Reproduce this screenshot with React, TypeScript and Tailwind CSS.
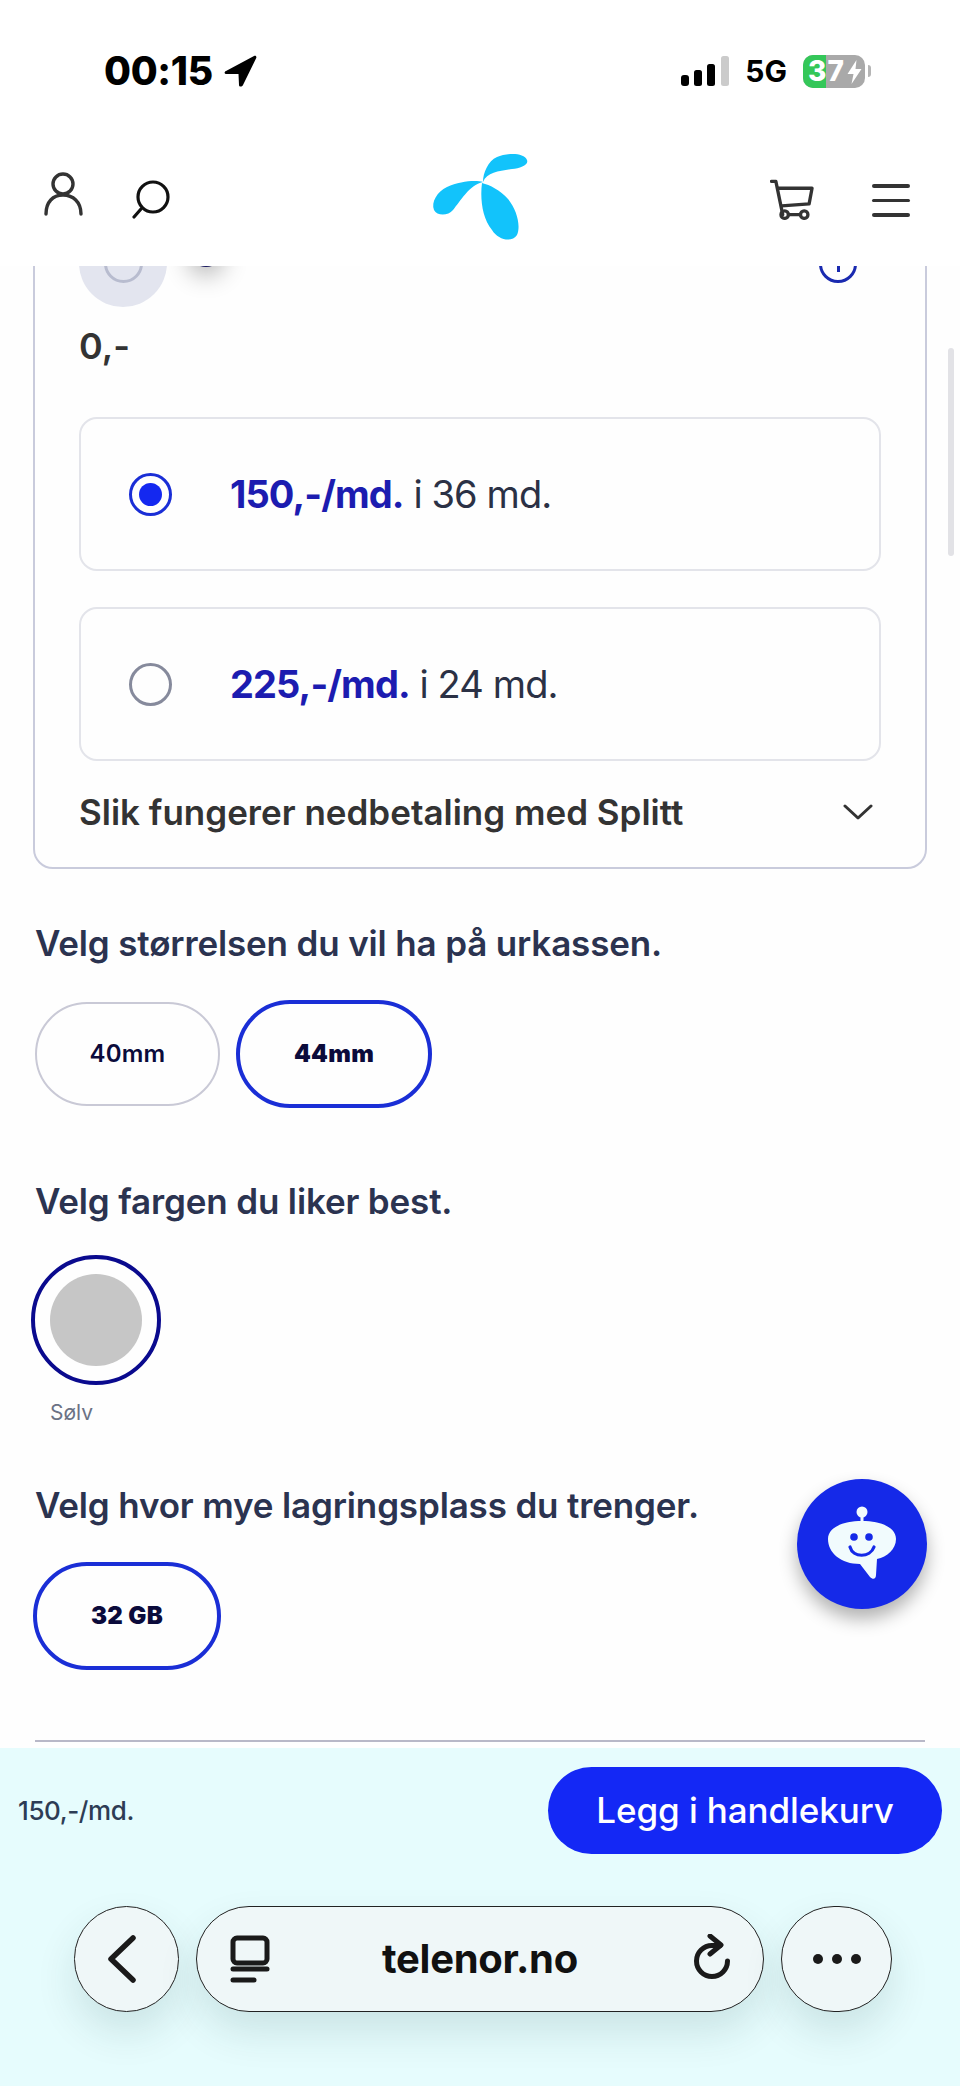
const font = { fontFamily: "Inter, 'Liberation Sans', sans-serif" };

function Logo() {
  return (
    <svg className="ml-[7px] mb-[3px]" width="100" height="95" viewBox="0 0 100 95" fill="#12c3fb">
      <path d="M53 32C53 23 58 11 67 7C76 3 94 2 97 10C99 15 90 18 82 19C70 21 57 22 53 32Z" />
      <path d="M53 32C46 30 30 31 17 37C7 42 1 52 4 60C7 66 18 66 23 60C30 52 39 35 53 32Z" />
      <path d="M52 33C50 48 52 68 62 80C68 90 82 93 87 85C91 76 87 60 78 49C70 40 60 35 52 33Z" />
    </svg>
  );
}

function ChatFace() {
  return (
    <svg width="70" height="76" viewBox="0 0 70 76">
      <circle cx="35" cy="6" r="5.5" fill="#f1fbfd" />
      <rect x="33.5" y="8" width="3" height="10" fill="#f1fbfd" />
      <path
        d="M35 15C55 15 69 22 69 33C69 43 60 51 50 53L49 69C49 73 46 74 43 71L33 58C14 58 1 47 1 33C1 22 15 15 35 15Z"
        fill="#f1fbfd"
      />
      <circle cx="27" cy="31" r="3.8" fill="#1529e8" />
      <circle cx="42" cy="31" r="3.8" fill="#1529e8" />
      <path d="M23 41C26 52 43 52 47 41" fill="none" stroke="#1529e8" strokeWidth="3.2" strokeLinecap="round" />
    </svg>
  );
}

function Heading({ children }: { children: React.ReactNode }) {
  return <h2 className="text-[35px] leading-[44px] font-semibold text-[#2b3350] tracking-[-0.15px]">{children}</h2>;
}

function Payment({ price, term, selected }: { price: string; term: string; selected?: boolean }) {
  return (
    <div className="flex items-center h-[154px] rounded-[18px] border-2 border-[#e3e4ea] pl-[48px]">
      <div
        className={
          selected
            ? "flex items-center justify-center w-[43px] h-[43px] rounded-full border-[3px] border-[#1a2ed6]"
            : "w-[43px] h-[43px] rounded-full border-[3px] border-[#868a9c]"
        }
      >
        {selected && <div className="w-[23px] h-[23px] rounded-full bg-[#1428f0]" />}
      </div>
      <p className="ml-[58px] text-[38px] text-[#2b3145] tracking-[-0.9px]">
        <span className="font-bold text-[#1c1cb0]">{price}</span> {term}
      </p>
    </div>
  );
}

function Pill({ label, selected, width }: { label: string; selected?: boolean; width: string }) {
  return (
    <div
      className={
        selected
          ? `flex items-center justify-center ${width} h-[108px] rounded-full border-4 border-[#1a2ed6] text-[24px] font-black text-[#0b0b3b] tracking-[0.3px]`
          : `flex items-center justify-center ${width} h-[104px] rounded-full border-2 border-[#c9c9d6] text-[24px] font-semibold text-[#0b0b3b] tracking-[0.2px]`
      }
    >
      {label}
    </div>
  );
}

export default function App() {
  return (
    <div className="relative flex flex-col w-[960px] h-[2086px] overflow-hidden bg-[#fefefe]" style={font}>
      <header className="h-[266px] shrink-0 bg-white">
        {/* status bar */}
        <div className="flex items-center justify-between h-[142px] pl-[104px] pr-[89px]">
          <div className="flex items-center gap-[11px]">
            <span className="text-[39px] font-extrabold text-black tracking-[-0.3px]">00:15</span>
            <svg width="33" height="32" viewBox="0 0 33 32">
              <path d="M2 16L30 1C32 0 33 2 32 3.500L19 30C18 32 15 32 15 30L14.500 19L3 19C0 19 0 17 2 16Z" fill="#000" />
            </svg>
          </div>
          <div className="flex items-center">
            <svg width="48" height="30" viewBox="0 0 48 30">
              <rect x="0" y="19" width="8" height="11" rx="3" fill="#000" />
              <rect x="13" y="14" width="8" height="16" rx="2.500" fill="#000" />
              <rect x="26" y="8" width="8" height="22" rx="2.500" fill="#000" />
              <rect x="40" y="0" width="8" height="30" rx="2.500" fill="#cbcbcb" />
            </svg>
            <span className="ml-[16px] text-[30px] leading-[40px] font-bold text-black">5G</span>
            <div className="relative flex items-center ml-[16px] w-[62px] h-[33px] rounded-[10px] bg-[#a9a9a9]">
              <div className="absolute left-0 top-0 w-[23px] h-[33px] rounded-l-[10px] bg-[#34c759]" />
              <span className="relative ml-[5px] text-[28px] leading-[33px] font-extrabold text-white tracking-[1px]">37</span>
              <svg className="absolute right-[3px] top-[5px]" width="15" height="24" viewBox="0 0 14 24">
                <path d="M9 0L0 14H6L4 24L14 9H8Z" fill="#fff" />
              </svg>
            </div>
            <div className="ml-[3px] w-[3px] h-[12px] rounded-r bg-[#b5b5b5]" />
          </div>
        </div>
        {/* nav */}
        <nav className="grid grid-cols-3 items-center h-[114px] pl-[43px] pr-[50px]">
          <div className="flex items-center gap-[47px]">
            <svg className="mb-[10px]" width="42" height="44" viewBox="0 0 42 44" fill="none" stroke="#333" strokeWidth="3.400" strokeLinecap="round">
              <circle cx="20" cy="12" r="10" />
              <path d="M3 42C3 30 10 23 20 23C30 23 38 30 38 42" />
            </svg>
            <svg width="40" height="40" viewBox="0 0 40 40" fill="none" stroke="#111" strokeWidth="3.200" strokeLinecap="round">
              <circle cx="21" cy="18" r="15" />
              <path d="M9 30L2 38" />
            </svg>
          </div>
          <div className="flex justify-center">
            <Logo />
          </div>
          <div className="flex items-center justify-end gap-[58px]">
            <svg width="44" height="42" viewBox="0 0 45 42" fill="none" stroke="#333" strokeWidth="3.400" strokeLinecap="round" strokeLinejoin="round">
              <path d="M1.500 3H6L13 37" />
              <path d="M8 10H43L40 26L12 28" />
              <circle cx="15" cy="37" r="3.800" />
              <circle cx="35" cy="37" r="3.800" />
              <path d="M19 37H31" />
            </svg>
            <div className="flex flex-col gap-[11px] w-[38px] mt-[3px]">
              <div className="h-[3.500px] rounded-full bg-[#333]" />
              <div className="h-[3.500px] rounded-full bg-[#333]" />
              <div className="h-[3.500px] rounded-full bg-[#333]" />
            </div>
          </div>
        </nav>
      </header>

      <main className="flex-1 min-h-0 overflow-hidden px-[35px]">
        {/* payment card, scrolled part way under the header */}
        <section className="-mt-[76px] -mx-[2px] h-[679px] rounded-[20px] border-2 border-[#c9cbdc] pt-[27px] px-[44px]">
          <div className="flex items-start h-[88px]">
            <div className="flex items-center justify-center w-[88px] h-[88px] rounded-full bg-[#e3e5ef]">
              <div className="w-[39px] h-[39px] rounded-full border-[3px] border-[#b8bccf]" />
            </div>
            <div className="ml-[21px] mt-[12px] w-[36px] h-[36px] rounded-full bg-[#16165c] shadow-[0_8px_24px_rgba(0,0,0,0.3)]" />
            <div className="flex items-center justify-center ml-auto mr-[24px] mt-[26px] w-[38px] h-[38px] rounded-full border-[3px] border-[#1a2ab0]">
              <div className="mt-[6px] w-[3px] h-[10px] bg-[#1a2ab0]" />
            </div>
          </div>
          <p className="mt-[17px] text-[36px] leading-[44px] font-semibold text-[#333]">0,-</p>
          <div className="flex flex-col gap-[36px] mt-[49px]">
            <Payment price="150,-/md." term="i 36 md." selected />
            <Payment price="225,-/md." term="i 24 md." />
          </div>
          <div className="flex items-center justify-between h-[60px] mt-[21px] pr-[8px]">
            <span className="text-[35px] font-semibold text-[#333]">Slik fungerer nedbetaling med Splitt</span>
            <svg width="30" height="16" viewBox="0 0 30 16" fill="none" stroke="#333" strokeWidth="3" strokeLinecap="round" strokeLinejoin="round">
              <path d="M2 2L15 14L28 2" />
            </svg>
          </div>
        </section>

        <div className="mt-[52px]">
          <Heading>Velg størrelsen du vil ha på urkassen.</Heading>
          <div className="flex items-center gap-[16px] mt-[35px]">
            <Pill label="40mm" width="w-[185px]" />
            <Pill label="44mm" width="w-[196px]" selected />
          </div>
        </div>

        <div className="mt-[71px]">
          <Heading>Velg fargen du liker best.</Heading>
          <div className="flex items-center justify-center -ml-[4px] mt-[32px] w-[130px] h-[130px] rounded-full border-4 border-[#0a0a8e]">
            <div className="w-[92px] h-[92px] rounded-full bg-[#c6c6c6]" />
          </div>
          <p className="mt-[14px] ml-[15px] text-[21px] leading-[28px] text-[#6b7285]">Sølv</p>
        </div>

        <div className="mt-[56px]">
          <Heading>Velg hvor mye lagringsplass du trenger.</Heading>
          <div className="-ml-[2px] mt-[35px]">
            <Pill label="32 GB" width="w-[188px]" selected />
          </div>
        </div>

        <div className="mt-[70px] h-[2px] bg-[#b8b8c8]" />
      </main>

      {/* scrollbar */}
      <div className="absolute right-[6px] top-[348px] w-[6px] h-[208px] rounded-full bg-[#e2e2e6]" />

      {/* chat button */}
      <button className="absolute left-[797px] top-[1479px] flex items-center justify-center w-[130px] h-[130px] rounded-full bg-[#1529e8] shadow-[0_10px_18px_rgba(0,0,0,0.3)]">
        <ChatFace />
      </button>

      <footer className="h-[338px] shrink-0 bg-[#e6fcfd] pt-[19px]">
        <div className="flex items-center justify-between pl-[18px] pr-[18px]">
          <span className="text-[26px] font-medium text-[#2d3c55] tracking-[-0.4px]">150,-/md.</span>
          <button className="w-[394px] h-[87px] rounded-full bg-[#1428f5] text-[35px] font-medium text-white tracking-[-0.1px]">
            Legg i handlekurv
          </button>
        </div>
        <div className="flex items-center mt-[52px] ml-[74px] gap-[17px]">
          <div className="flex items-center justify-center w-[105px] h-[106px] rounded-full border border-[#222] bg-[#eff7f8] shadow-[0_20px_40px_rgba(0,60,60,0.12)]">
            <svg className="mr-[10px]" width="30" height="48" viewBox="0 0 30 48" fill="none" stroke="#1a1a1a" strokeWidth="5.500" strokeLinecap="round" strokeLinejoin="round">
              <path d="M26 3L4 24L26 45" />
            </svg>
          </div>
          <div className="flex items-center justify-between w-[568px] h-[106px] rounded-[53px] border border-[#222] bg-[#eff7f8] pl-[33px] pr-[33px] shadow-[0_20px_40px_rgba(0,60,60,0.12)]">
            <svg width="40" height="48" viewBox="0 0 40 48" fill="none" stroke="#1a1a1a" strokeWidth="5" strokeLinecap="round">
              <rect x="3" y="3" width="34" height="25" rx="4" />
              <path d="M3 34H37" />
              <path d="M3 45H24" />
            </svg>
            <span className="text-[40px] font-bold text-[#111] tracking-[-0.3px]">telenor.no</span>
            <svg className="mb-[4px]" width="40" height="46" viewBox="-3 0 40 46" fill="none" stroke="#1a1a1a" strokeWidth="5" strokeLinecap="round" strokeLinejoin="round">
              <path d="M27 11.500H19A15.500 15.500 0 1 0 34.500 27" />
              <path d="M17 2L28 11L17 20" />
            </svg>
          </div>
          <div className="flex items-center justify-center gap-[9px] w-[111px] h-[106px] rounded-full border border-[#222] bg-[#eff7f8] shadow-[0_20px_40px_rgba(0,60,60,0.12)]">
            <div className="w-[10px] h-[10px] rounded-full bg-[#1a1a1a]" />
            <div className="w-[10px] h-[10px] rounded-full bg-[#1a1a1a]" />
            <div className="w-[10px] h-[10px] rounded-full bg-[#1a1a1a]" />
          </div>
        </div>
      </footer>
    </div>
  );
}
